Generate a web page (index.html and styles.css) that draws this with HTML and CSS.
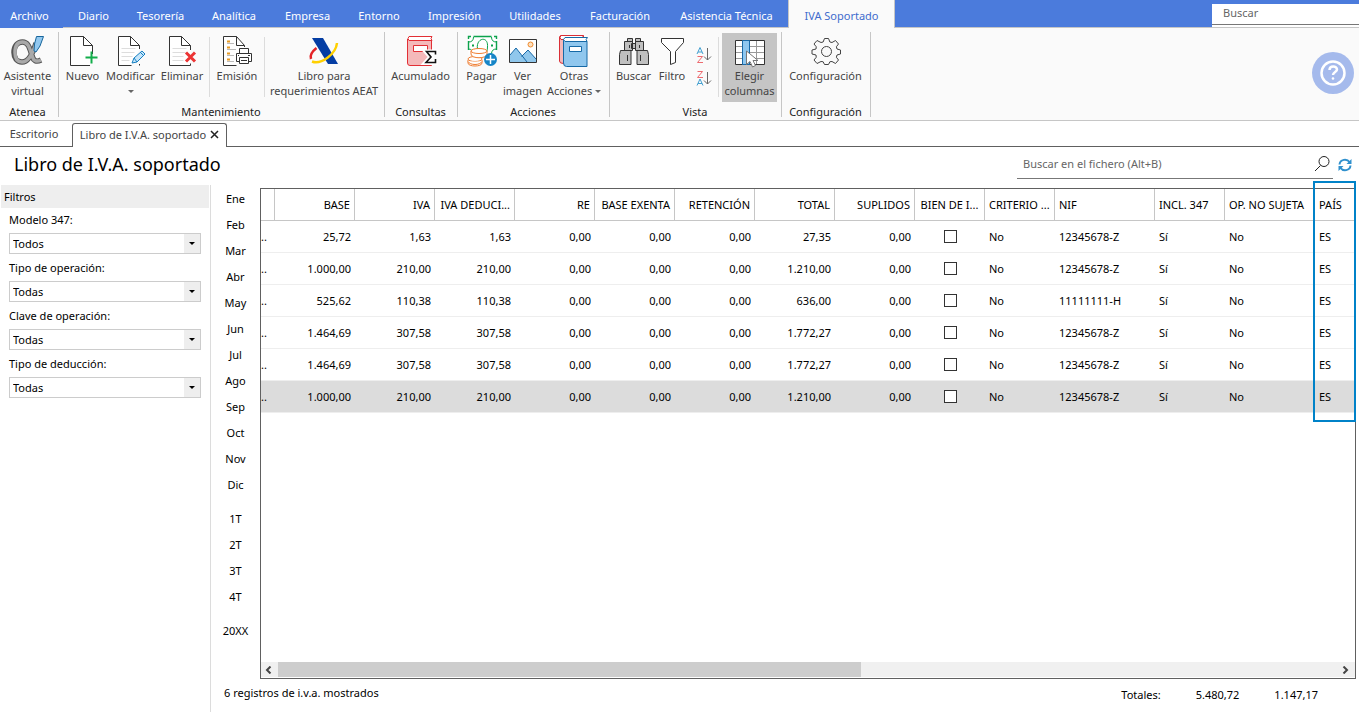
FILE: index.html
```html
<!DOCTYPE html>
<html lang="es">
<head>
<meta charset="utf-8">
<title>Libro de I.V.A. soportado</title>
<link rel="stylesheet" href="styles.css">
</head>
<body>
<div class="app">
<header class="menubar">
  <nav class="menu">
    <button class="menu-item menu-file">Archivo</button><button class="menu-item">Diario</button><button class="menu-item">Tesorería</button><button class="menu-item">Analítica</button><button class="menu-item">Empresa</button><button class="menu-item">Entorno</button><button class="menu-item">Impresión</button><button class="menu-item">Utilidades</button><button class="menu-item">Facturación</button><button class="menu-item">Asistencia Técnica</button><button class="menu-item menu-active">IVA Soportado</button>
  </nav>
  <div class="menu-search"><input type="text" placeholder="Buscar" aria-label="Buscar"></div>
</header>

<section class="ribbon">
  <div class="group">
    <div class="tools">
      <button class="tool w-large">
        <svg width="34" height="34" viewBox="0 0 34 34" fill="none"><path d="M25 9 C22 19 18 28 11 28 C6 28 3 24 3 18.500 C3 12 6.500 8 11.500 8 C18 8 19 16 21.500 23 C22.500 26.500 25 28.500 30 26" stroke="#555" stroke-width="5.500"/><path d="M25 9 C22 19 18 28 11 28 C6 28 4 24 4 18.500 C4 12 6.500 8 11.500 8 C18 8 19 16 21.500 23 C22.500 26.500 25 28.500 30 26" stroke="#a9a9a9" stroke-width="3.500"/><path d="M25.500 2.500h7L29 12l-4 6-2-1 .5-7z" fill="#92c8ef" stroke="#17659b"/></svg>
        <span>Asistente<br>virtual</span></button>
    </div>
    <h2>Atenea</h2>
  </div>
  <div class="group">
    <div class="tools">
      <button class="tool w-small">
        <svg width="34" height="34" viewBox="0 0 34 34" fill="none"><path d="M26.500 20V11.500l-9-9h-13v29H24M17.500 2.500v9h9" fill="#fff" stroke="#333"/><path d="M25.500 17.500v12M19.500 23.500h12" stroke="#12ad4a" stroke-width="2"/></svg>
        <span>Nuevo</span></button>
      <button class="tool w-large">
        <svg width="34" height="34" viewBox="0 0 34 34" fill="none"><path d="M25.500 15V11.500l-9-9h-12v29h13M16.500 2.500v9h9M25.500 30v1.500" fill="#fff" stroke="#333"/><path d="M7.500 14.500h14M7.500 18.500h13M7.500 22.500h11M7.500 26.500h8" stroke="#ddd"/><path d="M18 29l2-5 8-7 3 3-8 8zM26 18l3 3M20 24l3 4" fill="#c5e5fa" stroke="#1780c2"/></svg>
        <span>Modificar</span><i class="caret"></i></button>
      <button class="tool w-medium">
        <svg width="34" height="34" viewBox="0 0 34 34" fill="none"><path d="M25.500 16V11.500l-9-9h-12v29h21v-2M16.500 2.500v9h9" fill="#fff" stroke="#333"/><path d="M7.500 14.500h14M7.500 18.500h13M7.500 22.500h11M7.500 26.500h11" stroke="#ddd"/><path d="M21 18.500l9 9M30 18.500l-9 9" stroke="#ec3434" stroke-width="3"/></svg>
        <span>Eliminar</span></button>
      <i class="divider"></i>
      <button class="tool w-medium">
        <svg width="34" height="34" viewBox="0 0 34 34" fill="none"><path d="M24.500 13V11.500l-8-9h-13v29h13M16.500 2.500v9h8" fill="#fff" stroke="#333"/><path d="M7 7.500h3M7 13.500h3M7 19.500h3M7 25.500h3" stroke="#e79a23" stroke-width="2"/><path d="M7 9.500h7M7 15.500h9M7 21.500h7M7 27.500h7" stroke="#bbb"/><path d="M19.500 19v-4.500h9V19M19.500 27.500h-3v-8h15v8h-3" fill="#fff" stroke="#333"/><path d="M19.500 23.500h9v6h-9zM21 26.500h6M18 21.500h1M28 21.500h2" fill="#fff" stroke="#333"/></svg>
        <span>Emisión</span></button>
      <i class="divider"></i>
      <button class="tool w-xlarge">
        <svg width="34" height="34" viewBox="0 0 34 34" fill="none"><path d="M5 4h11l15 26H21z" fill="#043da3"/><path d="M9.500 14Q2 20 4 25" stroke="#e42328" stroke-width="2.500"/><path d="M5 27.500C14 31 29 20 30 9" stroke="#ffd000" stroke-width="2.500"/></svg>
        <span>Libro para<br>requerimientos AEAT</span></button>
    </div>
    <h2>Mantenimiento</h2>
  </div>
  <div class="group">
    <div class="tools">
      <button class="tool w-wide">
        <svg width="34" height="34" viewBox="0 0 34 34" fill="none"><path d="M3.500 5v24q0 2.500 2.500 2.500h21.500v-25" fill="#f4b9ba" stroke="#e22f35"/><path d="M28 2.500H5q-2 2 0 4h23q-2-2 0-4z" fill="#fff" stroke="#e22f35"/><path d="M9.500 11.500h14v6h-14z" fill="#fff" stroke="#e22f35"/><path d="M31 20v-2H22.500l4.500 5-5 5.500H31v-2.500" stroke="#fff" stroke-width="5"/><path d="M31.500 20.500V17.500H22.500l4.500 5.500-5 5.500h9.500V25" stroke="#111" stroke-width="1.600"/></svg>
        <span>Acumulado</span></button>
    </div>
    <h2>Consultas</h2>
  </div>
  <div class="group">
    <div class="tools">
      <button class="tool w-small">
        <svg width="34" height="34" viewBox="0 0 34 34" fill="none"><path d="M3.500 2.500h28v18h-28z" fill="#fff"/><path d="M8.500 2.500h18M8.500 20.500h6M3.500 7v9M31.500 7v9M3.500 5V2.500H6M29 2.500h2.500V5" stroke="#0ba24b" stroke-width="1.400"/><path d="M3.500 8q5 0 5-5M3.500 15q4 0 5 5M26.500 3q0 5 5 5M26.500 20q0-5 5-5M12.500 15c-2-11 11-14 10-2q0 3-1 5" stroke="#0ba24b"/><path d="M7 11.500h2M26 11.500h2" stroke="#0ba24b" stroke-width="2"/><g fill="#fff" stroke="#ef7d31"><path d="M3 26v3c0 4 14 4 14 0v-3"/><ellipse cx="10" cy="25" rx="7" ry="2.500"/><path d="M6 17v3c0 5 16 5 16 0v-3"/><ellipse cx="14" cy="17" rx="8" ry="2.500"/><path d="M3 27.500c2 4 12 4 14 0"/></g><circle cx="25.500" cy="25.500" r="6.500" fill="#1685c7"/><path d="M25.500 21v9M21 25.500h9" stroke="#fff" stroke-width="1.500"/></svg>
        <span>Pagar</span></button>
      <button class="tool w-small">
        <svg width="34" height="34" viewBox="0 0 34 34" fill="none"><path d="M3.500 5.500h27v23h-27z" fill="#fff"/><path d="M4 21l6-7 11 14H4zM15 23l7-7 8 9v3H18z" fill="#90c7ec"/><path d="M4 21l6-7 11 14M15.500 22.500L22 16l8 9" stroke="#1869a8"/><circle cx="24.500" cy="10.500" r="2.500" fill="#fde1bf" stroke="#f08a2e"/><path d="M3.500 5.500h27v23h-27z" stroke="#333"/></svg>
        <span>Ver<br>imagen</span></button>
      <button class="tool w-actions">
        <svg width="34" height="34" viewBox="0 0 34 34" fill="none"><path d="M2.500 3v24q0 2.500 4 2.500V5.500h20v-4h-23z" fill="#f4b9ba" stroke="#d92f37"/><path d="M26 1.500H4q-2 2 0 4h22z" fill="#fff" stroke="#d92f37"/><path d="M6.500 5v24q0 3.500 3 3.500h20.500v-25" fill="#90c7ee" stroke="#1669a6"/><path d="M30.500 3.500H8q-3 2 0 4h22q-2-2 .5-4z" fill="#fff" stroke="#1669a6"/><path d="M12.500 12.500h12v5h-12z" fill="#fff" stroke="#1669a6"/></svg>
        <span>Otras<br>Acciones <i class="caret caret-inline"></i></span></button>
    </div>
    <h2>Acciones</h2>
  </div>
  <div class="group">
    <div class="tools">
      <button class="tool w-small">
        <svg width="34" height="34" viewBox="0 0 34 34" fill="#bfbfbf" stroke="#333"><path d="M14.500 9.500h4v5h-4zM10.500 4.500h5v3h-5zM18.500 4.500h5v3h-5zM7.500 7.500h8v9h-8zM18.500 7.500h8v9h-8zM3.500 16.500h10.500v14H2.500v-10zM20 16.500h10.500l1 4v10H20zM10.500 21v6M23.500 21v6M12.500 11v3M22.500 11v3"/></svg>
        <span>Buscar</span></button>
      <button class="tool w-filter">
        <svg width="34" height="34" viewBox="0 0 34 34" fill="none"><path d="M6.500 4.500h22v4l-8 9v11l-5 2v-13l-9-9z" fill="#fff" stroke="#333"/></svg>
        <span>Filtro</span></button>
      <div class="sorters">
        <button class="sorter" aria-label="Orden ascendente"><svg width="16" height="18" viewBox="0 0 16 18" fill="none"><path d="M1 8l3-6.500L7 8M2 6h4" stroke="#429fd0"/><path d="M1.500 10.500h5l-5 6h5.500" stroke="#ed6b70"/><path d="M11.500 2v12M8 10.500l3.500 3.500 3.500-3.500" stroke="#666"/></svg></button>
        <button class="sorter" aria-label="Orden descendente"><svg width="16" height="18" viewBox="0 0 16 18" fill="none"><path d="M1.500 2.500h5l-5 6h5.500" stroke="#ed6b70"/><path d="M1 16.500L4 10l3 6.500M2 14.500h4" stroke="#429fd0"/><path d="M11.500 3v12M8 11.500l3.500 3.500 3.500-3.500" stroke="#666"/></svg></button>
      </div>
      <i class="divider"></i>
      <button class="tool w-large tool-on">
        <svg width="34" height="34" viewBox="0 0 34 34" fill="none"><path d="M2.500 6.500h29v24h-29z" fill="#fff"/><path d="M2 12.500h29M2 18.500h29M2 24.500h29M23.500 7v24" stroke="#999"/><path d="M2.500 6.500h29v24h-29z" stroke="#333"/><path d="M9.500 6.500h7v24h-7z" fill="#8fc7ef" stroke="#1869a8"/><path d="M13.500 17v13.500l3.500-3 2.500 5.500 3-1.500-2.500-5h5z" fill="#fff" stroke="#777"/></svg>
        <span>Elegir<br>columnas</span></button>
    </div>
    <h2>Vista</h2>
  </div>
  <div class="group">
    <div class="tools">
      <button class="tool w-config">
        <svg width="34" height="34" viewBox="0 0 34 34" fill="none" stroke="#444"><path d="M12 8.500q2.500 1 3.500-4h4q1 5 3.500 4l3.500-2 3 3.500q-3.500 3-1.500 5l3.500 1v4l-3.500 1q-2 2 1.500 5l-3 3.500-3.500-2q-2.500-1-3.500 3h-4q-1-4-3.500-3l-4 2-3-3.500q3.500-3 2-5l-4-1v-4l4-1q1.500-2-2-5l3-3.500z"/><circle cx="17.500" cy="17.500" r="5"/></svg>
        <span>Configuración</span></button>
    </div>
    <h2>Configuración</h2>
  </div>
  <button class="help" aria-label="Ayuda"><svg width="42" height="42" viewBox="0 0 42 42" fill="none"><circle cx="21" cy="21" r="21" fill="#a5baec"/><circle cx="21" cy="21" r="11.500" stroke="#fff" stroke-width="2.500"/><path d="M17.500 18c0-5 7.500-4.500 7.500-.5 0 2.500-4 2.500-4 5.500" stroke="#fff" stroke-width="2.500"/><circle cx="21" cy="26.500" r="1.300" fill="#fff"/></svg></button>
</section>

<nav class="tabs">
  <button class="tab">Escritorio</button>
  <div class="tab tab-active"><span>Libro de I.V.A. soportado</span><button class="close" aria-label="Cerrar"><svg width="9" height="9" viewBox="0 0 9 9"><path d="M1 1l7 7M8 1l-7 7" stroke="#222" stroke-width="1.500"/></svg></button></div>
</nav>

<div class="heading">
  <h1>Libro de I.V.A. soportado</h1>
  <div class="finder"><input type="text" placeholder="Buscar en el fichero (Alt+B)" aria-label="Buscar en el fichero"><svg width="17" height="17" viewBox="0 0 17 17" fill="none" stroke="#222"><circle cx="10" cy="6.500" r="5"/><path d="M6.500 10.500L1 16"/></svg></div>
  <button class="refresh" aria-label="Actualizar"><svg width="14" height="14" viewBox="0 0 14 14" fill="none" stroke="#2f90cd" stroke-width="2"><path d="M1.500 6.500C2 1 9 .5 11.500 4"/><path d="M12.500 7.500C12 13 5 13.500 2.500 10"/><path d="M13.500 1v5H8.500zM.5 13V8h5z" fill="#2f90cd" stroke="none"/></svg></button>
</div>

<main class="content">
  <aside class="filters">
    <h2>Filtros</h2>
    <div class="fields">
      <label for="f1">Modelo 347:</label><div class="combo"><select id="f1"><option>Todos</option></select></div>
      <label for="f2">Tipo de operación:</label><div class="combo"><select id="f2"><option>Todas</option></select></div>
      <label for="f3">Clave de operación:</label><div class="combo"><select id="f3"><option>Todas</option></select></div>
      <label for="f4">Tipo de deducción:</label><div class="combo"><select id="f4"><option>Todas</option></select></div>
    </div>
  </aside>
  <div class="main">
    <nav class="periods">
      <button>Ene</button><button>Feb</button><button>Mar</button><button>Abr</button><button>May</button><button>Jun</button><button>Jul</button><button>Ago</button><button>Sep</button><button>Oct</button><button>Nov</button><button>Dic</button>
      <button class="period-first">1T</button><button>2T</button><button>3T</button><button>4T</button>
      <button class="period-first">20XX</button>
    </nav>
    <div class="grid">
      <div class="grid-body">
        <table>
          <colgroup><col class="c-cut"><col class="c-num" span="8"><col class="c-flag" span="2"><col class="c-nif"><col class="c-flag"><col class="c-op"><col></colgroup>
          <thead><tr><th></th><th class="n">BASE</th><th class="n">IVA</th><th class="n">IVA DEDUCI...</th><th class="n">RE</th><th class="n">BASE EXENTA</th><th class="n">RETENCIÓN</th><th class="n">TOTAL</th><th class="n">SUPLIDOS</th><th class="k">BIEN DE I...</th><th>CRITERIO ...</th><th>NIF</th><th>INCL. 347</th><th>OP. NO SUJETA</th><th>PAÍS</th></tr></thead>
          <tbody>
            <tr><td class="cut">..</td><td class="n">25,72</td><td class="n">1,63</td><td class="n">1,63</td><td class="n">0,00</td><td class="n">0,00</td><td class="n">0,00</td><td class="n">27,35</td><td class="n">0,00</td><td class="k"><input type="checkbox" aria-label="Bien de inversión"></td><td>No</td><td>12345678-Z</td><td>Sí</td><td>No</td><td>ES</td></tr>
            <tr><td class="cut">..</td><td class="n">1.000,00</td><td class="n">210,00</td><td class="n">210,00</td><td class="n">0,00</td><td class="n">0,00</td><td class="n">0,00</td><td class="n">1.210,00</td><td class="n">0,00</td><td class="k"><input type="checkbox" aria-label="Bien de inversión"></td><td>No</td><td>12345678-Z</td><td>Sí</td><td>No</td><td>ES</td></tr>
            <tr><td class="cut">..</td><td class="n">525,62</td><td class="n">110,38</td><td class="n">110,38</td><td class="n">0,00</td><td class="n">0,00</td><td class="n">0,00</td><td class="n">636,00</td><td class="n">0,00</td><td class="k"><input type="checkbox" aria-label="Bien de inversión"></td><td>No</td><td>11111111-H</td><td>Sí</td><td>No</td><td>ES</td></tr>
            <tr><td class="cut">..</td><td class="n">1.464,69</td><td class="n">307,58</td><td class="n">307,58</td><td class="n">0,00</td><td class="n">0,00</td><td class="n">0,00</td><td class="n">1.772,27</td><td class="n">0,00</td><td class="k"><input type="checkbox" aria-label="Bien de inversión"></td><td>No</td><td>12345678-Z</td><td>Sí</td><td>No</td><td>ES</td></tr>
            <tr><td class="cut">..</td><td class="n">1.464,69</td><td class="n">307,58</td><td class="n">307,58</td><td class="n">0,00</td><td class="n">0,00</td><td class="n">0,00</td><td class="n">1.772,27</td><td class="n">0,00</td><td class="k"><input type="checkbox" aria-label="Bien de inversión"></td><td>No</td><td>12345678-Z</td><td>Sí</td><td>No</td><td>ES</td></tr>
            <tr class="selected"><td class="cut">..</td><td class="n">1.000,00</td><td class="n">210,00</td><td class="n">210,00</td><td class="n">0,00</td><td class="n">0,00</td><td class="n">0,00</td><td class="n">1.210,00</td><td class="n">0,00</td><td class="k"><input type="checkbox" aria-label="Bien de inversión"></td><td>No</td><td>12345678-Z</td><td>Sí</td><td>No</td><td>ES</td></tr>
          </tbody>
        </table>
      </div>
      <div class="scrollbar">
        <button aria-label="Desplazar a la izquierda"><svg width="7" height="8" viewBox="0 0 7 8" fill="none"><path d="M5.500 .5L2 4l3.500 3.500" stroke="#444" stroke-width="2"/></svg></button>
        <div class="track"><div class="thumb"></div></div>
        <button aria-label="Desplazar a la derecha"><svg width="7" height="8" viewBox="0 0 7 8" fill="none"><path d="M1.500 .5L5 4 1.500 7.500" stroke="#444" stroke-width="2"/></svg></button>
      </div>
      <div class="highlight"></div>
    </div>
    <footer class="status"><span class="count">6 registros de i.v.a. mostrados</span><span class="totals"><span>Totales:</span><span>5.480,72</span><span>1.147,17</span></span></footer>
  </div>
</main>
</div>
</body>
</html>
```
FILE: styles.css
```css
* { box-sizing: border-box; }
body { margin: 0; background: #fff; color: #000; font-family: "Noto Sans", "Open Sans", sans-serif; font-size: 11px; line-height: 15px; }
button, input, select { font: inherit; color: inherit; margin: 0; padding: 0; border: 0; background: none; }
h1, h2 { margin: 0; font-weight: 400; font-size: 11px; }
svg { display: block; }
.app { display: flex; flex-direction: column; min-height: 100vh; }

.menubar { display: flex; justify-content: space-between; height: 28px; background: #4b7bdc; border-bottom: 1px solid #c6c6c6; }
.menu { display: grid; grid-template-columns: 63px 61px 73px 74px 73px 70px 81px 80px 90px 123px 107px; }
.menu-item { height: 27px; padding-top: 4px; color: #fff; white-space: nowrap; }
.menu-file { height: 28px; background: #4b7bdc; padding: 3px 4px 0 0; }
.menu-active { height: 28px; padding-top: 3px; background: #fafafa; color: #3f6ccd; border-left: 1px solid #c6c6c6; border-right: 1px solid #c6c6c6; }
.menu-search { width: 147px; padding-top: 4px; }
.menu-search input { display: block; width: 100%; height: 21px; padding: 0 11px 3px; background: #fff; border-bottom: 1px solid #777; box-shadow: 0 2px #fff; }
input::placeholder { color: #666; opacity: 1; }

.ribbon { display: flex; height: 93px; background: #fafafa; border-bottom: 1px solid #c6c6c6; color: #444; }
.group { position: relative; padding: 5px 4px 0 3px; border-right: 1px solid transparent; }
.group::after { content: ""; position: absolute; right: -1px; top: 4px; bottom: 3px; width: 1px; background: #c6c6c6; }
.group:first-child { padding: 5px 3px 0 0; }
.tools { display: flex; height: 69px; }
.group h2 { padding-top: 2px; text-align: center; color: #222; }
.tool { display: flex; flex-direction: column; align-items: center; padding-top: 1px; white-space: nowrap; }
.tool svg, .tool span { flex: none; }
.tool-on { background: #c5c5c5; }
.w-small { width: 41px; }
.w-filter { width: 36px; }
.w-medium { width: 48px; }
.w-large { width: 55px; }
.w-actions { width: 62px; }
.w-wide { width: 65px; }
.w-config { width: 81px; }
.w-xlarge { width: 112px; }
.divider { width: 1px; height: 60px; margin: 4px 3px 0; background: #dcdcdc; }
.caret { width: 0; margin-top: 7px; border: 3px solid transparent; border-top-color: #666; border-bottom: 0; }
.caret-inline { display: inline-block; vertical-align: 2px; margin: 0; }
.sorters { display: flex; flex-direction: column; gap: 5px; padding: 13px 3px 0 6px; }
.help { margin: 24px 5px 0 auto; align-self: flex-start; }

.tabs { display: flex; height: 26px; border-bottom: 1px solid #606060; color: #444; }
.tab { width: 72px; padding: 0 4px 1px 0; }
.tab-active { display: flex; align-items: center; justify-content: center; gap: 4px; width: 155px; height: 24px; margin-top: 2px; padding: 0 0 2px; background: #fff; border: 1px solid #606060; border-bottom: 0; border-radius: 3px 3px 0 0; }

.heading { display: flex; height: 38px; padding: 3px 7px 0 14px; }
h1 { flex: 1; font-size: 18px; line-height: 28px; }
.finder { display: flex; align-items: center; width: 316px; height: 29px; padding: 0 2px 2px 6px; border-bottom: 1px solid #777; }
.finder input { flex: 1; }
.refresh { height: 29px; padding-left: 5px; }

.content { display: flex; flex: 1; }
.filters { width: 211px; padding-left: 1px; border-right: 1px solid #dcdcdc; }
.filters h2 { height: 23px; margin-right: 1px; padding: 4px 3px; background: #eee; }
.fields { padding: 4px 9px 0 8px; }
.fields label { display: block; height: 21px; }
.combo { position: relative; height: 21px; margin-bottom: 6px; border: 1px solid #ccc; }
.combo select { display: block; width: 100%; height: 19px; padding: 0 3px; appearance: none; background: linear-gradient(#eee, #eee) right / 16px 100% no-repeat; }
.combo::after { content: ""; position: absolute; right: 5px; top: 8px; border: 3px solid transparent; border-top-color: #000; border-bottom: 0; }

.main { flex: 1; display: grid; grid-template-columns: 49px 1fr; grid-template-rows: 1fr 33px; min-width: 0; padding: 3px 3px 0 0; }
.periods { display: flex; flex-direction: column; }
.periods button { height: 26px; padding-bottom: 6px; }
.periods .period-first { margin-top: 8px; }
.grid { position: relative; display: flex; flex-direction: column; min-width: 0; border: 1px solid #606060; }
.grid-body { flex: 1; }
table { width: 100%; table-layout: fixed; border-collapse: separate; border-spacing: 0; }
.c-cut { width: 14px; }
.c-num { width: 80px; }
.c-flag { width: 70px; }
.c-nif { width: 100px; }
.c-op { width: 90px; }
th, td { height: 32px; padding: 0 4px; overflow: hidden; text-align: left; white-space: nowrap; font-weight: 400; border-bottom: 1px solid #eee; }
th { border-right: 1px solid #c6c6c6; border-bottom-color: #c6c6c6; }
th:last-child { border-right: 0; }
.n { text-align: right; }
th.n { padding-left: 0; }
td.cut { padding: 0; }
.k { text-align: center; }
.k input { display: block; width: 13px; height: 13px; margin: 0 auto; appearance: none; background: #fff; border: 1px solid #333; }
.selected td { background: #dcdcdc; }
.scrollbar { display: flex; height: 16px; background: #f0f0f0; border-bottom: 1px solid #fff; }
.scrollbar button { width: 17px; padding-left: 4px; }
.track { flex: 1; }
.thumb { width: 55%; height: 15px; background: #cdcdcd; }
.highlight { position: absolute; top: -8px; right: -1px; width: 43px; height: 241px; border: 2px solid #0082c8; }
.status { grid-column: 1 / -1; display: flex; justify-content: space-between; padding: 6px 38px 0 13px; }
.totals { display: flex; gap: 35px; padding-top: 2px; }
```
